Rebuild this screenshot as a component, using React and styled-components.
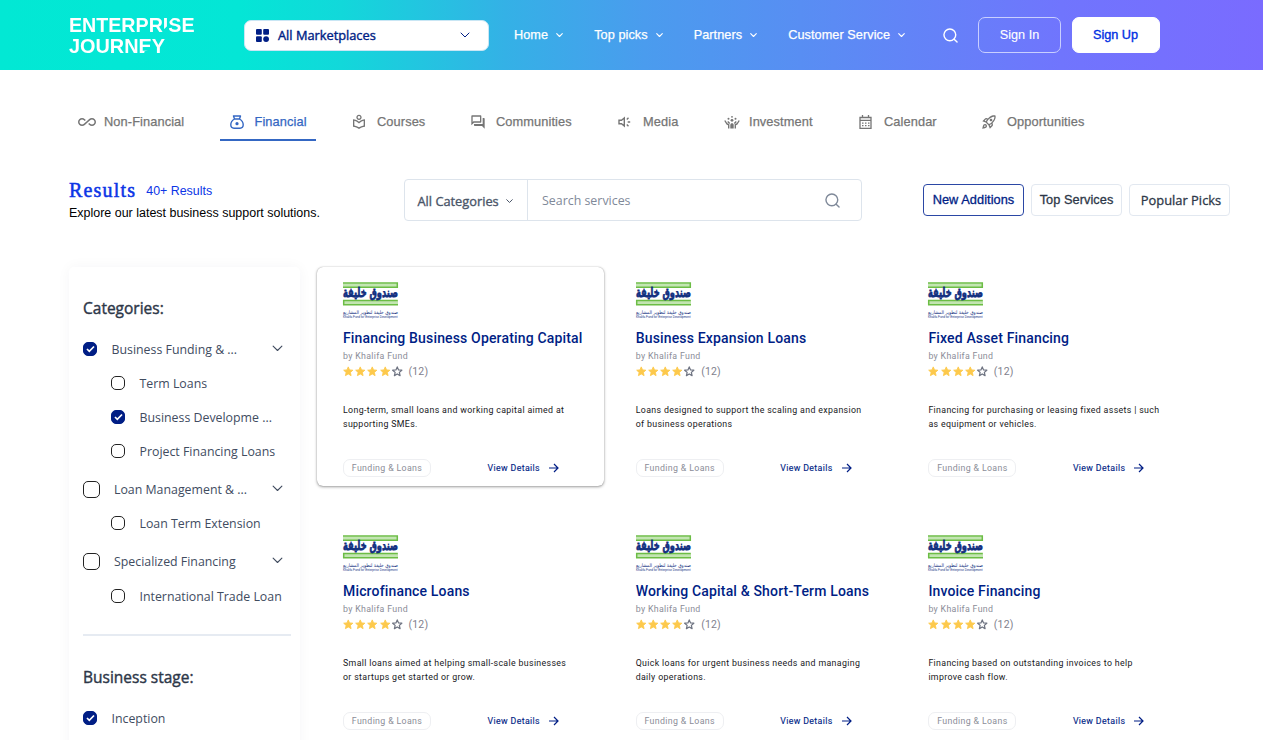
import React from "react";
import styled, { createGlobalStyle } from "styled-components";
import { MdOutlineLocalLibrary, MdOutlineForum, MdAllInclusive, MdOutlineRocketLaunch } from "react-icons/md";

const helv = '"Liberation Sans", Arial, sans-serif';
const open = '"Open Sans", "Noto Sans", sans-serif';

const Global = createGlobalStyle`
  * { box-sizing: border-box; }
  html, body { margin: 0; background: #fff; overflow: hidden; height: 740px; }
  svg { display: block; flex: none; overflow: visible; }
`;

const Page = styled.div`
  width: 1263px;
  height: 740px;
  overflow: hidden;
  background: #fff;
`;

const Header = styled.header`
  display: flex;
  align-items: center;
  height: 70px;
  padding: 0 103px 0 69px;
  background: linear-gradient(90deg, #02e8d4 0%, #04e6d6 19%, #12d8da 27%, #34b1e6 40%, #4a9cee 51%, #5b8bf4 66%, #7075fd 84%, #7a6bff 100%);
`;

const Marketplaces = styled.div`
  display: flex;
  align-items: center;
  width: 245px;
  height: 31px;
  margin-left: 49px;
  padding: 0 18px 0 11px;
  background: #fff;
  border: 1px solid #c9e6f4;
  border-radius: 7px;
  color: #001e85;
  font: 12.8px/30px ${open};
`;

const MarketLabel = styled.span`
  flex: 1;
  margin-left: 9px;
  -webkit-text-stroke: 0.4px;
`;

const Nav = styled.nav`
  display: flex;
  gap: 31px;
  margin-left: 25px;
  flex: 1;
`;

const NavItem = styled.div`
  display: flex;
  align-items: center;
  gap: 8px;
  color: #fff;
  font: 12.7px/20px ${helv};
  letter-spacing: 0.07px;
  -webkit-text-stroke: 0.25px #fff;
  white-space: nowrap;
`;

const HeaderButton = styled.button`
  width: ${(p) => p.$w}px;
  height: 36px;
  margin-left: ${(p) => p.$ml}px;
  padding: ${(p) => (p.$solid ? "0 1px 1px 0" : "0 0 1px")};
  border: 1px solid ${(p) => (p.$solid ? "#fff" : "#c9cfff")};
  border-radius: 7px;
  background: ${(p) => (p.$solid ? "#fff" : "transparent")};
  color: ${(p) => (p.$solid ? "#0030e3" : "#fff")};
  font: 12.7px/20px ${helv};
  -webkit-text-stroke: ${(p) => (p.$solid ? 0.35 : 0.1)}px;
`;

const Tabs = styled.nav`
  display: flex;
  height: 32px;
  margin: 39px 0 0 78px;
`;

const Tab = styled.div`
  display: flex;
  align-items: center;
  width: ${(p) => p.$w}px;
  height: 26px;
  color: ${(p) => (p.$active ? "#3467c3" : "#757575")};
  white-space: nowrap;
`;

const ActiveTab = styled(Tab)`
  height: 32px;
  width: 96px;
  margin-left: ${(p) => p.$ml}px;
  margin-right: ${(p) => p.$mr}px;
  padding: 0 0 4px 10px;
  border-bottom: 2px solid #3467c3;
`;

const TabLabel = styled.span`
  margin-left: ${(p) => p.$gap}px;
  font: 12.8px/20px ${helv};
  letter-spacing: 0.1px;
  -webkit-text-stroke: 0.25px;
`;

const Toolbar = styled.section`
  display: flex;
  height: 42px;
  margin: 38px 33px 0 69px;
`;

const Intro = styled.div`
  width: 335px;
`;

const TitleRow = styled.div`
  display: flex;
  height: 23px;
`;

const Title = styled.h1`
  margin: 0;
  color: #0c35e6;
  font: 20px/22px "Liberation Serif", serif;
  letter-spacing: 1.2px;
  -webkit-text-stroke: 0.5px;
`;

const Count = styled.span`
  margin-left: 10px;
  color: #0c35e6;
  font: 12.4px/24px ${helv};
`;

const Lead = styled.p`
  margin: 0;
  color: #000;
  font: 12.47px/22px ${helv};
  white-space: nowrap;
`;

const SearchBox = styled.div`
  display: flex;
  width: 458px;
  height: 42px;
  border: 1px solid #dde4ec;
  border-radius: 4px;
`;

const CategorySelect = styled.div`
  display: flex;
  align-items: center;
  justify-content: space-between;
  width: 123px;
  padding: 2px 14px 0 12.5px;
  border-right: 1px solid #dde4ec;
  color: #4a5568;
  font: 12.8px/20px ${open};
  -webkit-text-stroke: 0.35px;
`;

const SearchField = styled.div`
  display: flex;
  flex: 1;
  align-items: center;
  justify-content: space-between;
  padding: 0 21px 0 14px;
  color: #7f8999;
  font: 12.4px/20px ${open};
`;

const Placeholder = styled.span`
  padding-top: 2px;
`;

const Filters = styled.div`
  display: flex;
  gap: 7px;
  margin: 5px 0 0 61px;
`;

const FilterButton = styled.button`
  width: ${(p) => p.$w}px;
  height: 32px;
  padding: ${(p) => (p.$sans ? "0 0 0 3px" : "0 0 1px")};
  border: 1px solid ${(p) => (p.$active ? "#2b47a5" : "#e2e8f0")};
  border-radius: 4px;
  background: #fff;
  color: ${(p) => (p.$active ? "#001e85" : "#2d3748")};
  font: ${(p) => (p.$sans ? `12.9px/20px ${open}` : `12.75px/20px ${helv}`)};
  -webkit-text-stroke: 0.3px;
  letter-spacing: ${(p) => (p.$sans ? 0 : 0.06)}px;
  white-space: nowrap;
`;

const Content = styled.main`
  display: flex;
  margin: 46px 0 0 69px;
`;

const Sidebar = styled.aside`
  width: 231px;
  height: 520px;
  padding: 31px 9px 0 14px;
  border-radius: 5px;
  box-shadow: 0 0 14px rgba(30, 40, 60, 0.045);
`;

const GroupTitle = styled.h2`
  margin: 0;
  color: #2d3748;
  font: 400 15.5px/20px ${open};
  -webkit-text-stroke: 0.4px;
`;

const FilterRow = styled.div`
  display: flex;
  align-items: center;
  height: 20px;
  margin-top: ${(p) => p.$mt}px;
  padding: 0 8px 0 ${(p) => (p.$child ? 28 : 0)}px;
  color: #414c5f;
  font: 12.35px/20px ${open};
  white-space: nowrap;
`;

const RowLabel = styled.span`
  flex: 1;
  margin-left: ${(p) => (p.$large ? 14 : 14.5)}px;
  padding-top: 1px;
`;

const Box = styled.span`
  display: flex;
  flex: none;
  align-items: center;
  justify-content: center;
  width: ${(p) => (p.$large ? 17 : 14)}px;
  height: ${(p) => (p.$large ? 17 : 14)}px;
  border: 1px solid ${(p) => (p.$on ? "#001e85" : "#222")};
  border-radius: 5px;
  background: ${(p) => (p.$on ? "#001e85" : "#fff")};
`;

const Divider = styled.hr`
  height: 2px;
  margin: 28px 0 31px;
  border: 0;
  background: #e6ebf2;
`;

const Grid = styled.div`
  display: grid;
  grid-template-columns: repeat(3, 286.5px);
  grid-auto-rows: 219px;
  column-gap: 6.2px;
  row-gap: 34.3px;
  margin-left: 17px;
`;

const CardBox = styled.article`
  padding: 14px 20px 0 26px;
  border-radius: 6px;
  box-shadow: ${(p) => (p.$raised ? "0 1px 3px rgba(0,0,0,.38), 0 0 1px rgba(0,0,0,.3)" : "none")};
  font-family: Roboto, sans-serif;
`;

const CardTitle = styled.h3`
  margin: 9px 0 0;
  color: #001e85;
  font: 500 14px/20px Roboto, sans-serif;
  letter-spacing: 0.16px;
  white-space: nowrap;
`;

const Vendor = styled.div`
  margin-top: 1px;
  color: #8b8d98;
  font-size: 8.8px;
  line-height: 14px;
  letter-spacing: 0.32px;
`;

const Rating = styled.div`
  display: flex;
  align-items: center;
  gap: 1.7px;
  height: 16px;
  color: #7f818d;
  font-size: 10.5px;
  letter-spacing: 0.2px;
`;

const Votes = styled.span`
  margin: 1px 0 0 4.5px;
`;

const Description = styled.p`
  height: 28px;
  margin: 24px -10px 0 0;
  color: #17171b;
  font-size: 8.8px;
  line-height: 14px;
  letter-spacing: 0.345px;
  white-space: pre;
`;

const CardFooter = styled.div`
  display: flex;
  align-items: center;
  margin-top: 28px;
`;

const Tag = styled.span`
  width: 88px;
  height: 18px;
  border: 1px solid #eeeff2;
  border-radius: 7px;
  color: #8b8d98;
  font-size: 8.8px;
  line-height: 17px;
  letter-spacing: 0.35px;
  text-align: center;
`;

const Details = styled.span`
  display: flex;
  align-items: center;
  gap: 9px;
  margin-left: 56.5px;
  color: #001e85;
  font-size: 8.8px;
  letter-spacing: 0.36px;
  -webkit-text-stroke: 0.12px;
`;

function Chevron({ w = 8, stroke = 1 }) {
  return (
    <svg width={w} height={w * 0.7} viewBox="0 0 10 7" fill="none" stroke="currentColor" strokeWidth={stroke * 10 / w}>
      <path d="M1 1l4 4 4-4" strokeLinecap="round" strokeLinejoin="round" />
    </svg>
  );
}

function SearchIcon({ size }) {
  return (
    <svg width={size} height={size} viewBox="0 0 16 16" fill="none" stroke="currentColor" strokeWidth="1.5">
      <circle cx="7.3" cy="7.3" r="6.3" />
      <path d="M11.9 11.9L15 15" strokeLinecap="round" />
    </svg>
  );
}

function Star({ empty }) {
  return (
    <svg width="10.5" height="10.5" viewBox="0 0 24 24" fill={empty ? "none" : "#fdc94c"} stroke={empty ? "#6f7482" : "#fdc94c"} strokeWidth={empty ? 2.8 : 2} strokeLinejoin="round">
      <path d="M12 2l3 6.900 7.500.700-5.700 5 1.700 7.400-6.500-3.900L5.500 22l1.700-7.400-5.700-5L9 8.900z" />
    </svg>
  );
}

function BrandLogo() {
  return (
    <svg width="126" height="42" viewBox="0 0 126 42">
      <defs>
        <mask id="brand-cuts">
          <rect width="126" height="42" fill="#fff" />
          <path d="M94 16L99.500 11V20H94zM99 2.500h6L99 9zM75.300 42V37.500L84 34V42z" fill="#000" />
        </mask>
      </defs>
      <g mask="url(#brand-cuts)" fill="#fff" fontFamily="Liberation Sans, Arial, sans-serif" fontSize="19.400" fontWeight="700">
        <text x="0" y="17.600" textLength="125.5" lengthAdjust="spacingAndGlyphs">ENTERPRISE</text>
        <text x="0" y="39.200" textLength="96" lengthAdjust="spacingAndGlyphs">JOURNEY</text>
      </g>
    </svg>
  );
}

function FundLogo() {
  return (
    <svg width="56" height="38" viewBox="0 0 56 38">
      <path d="M0 2.500h54v4H0zM1 19.500h54v4H1z" fill="#c3e5b2" />
      <path d="M0 2H54.300V6.300H0M54.800 19.500H.700V23.800H55" fill="none" stroke="#6cbd45" strokeWidth="1.500" />
      <text transform="translate(0 15.800) scale(1 1.150)" x="0" y="0" direction="ltr" fontFamily="DejaVu Sans" fontWeight="700" fontSize="11.500" fill="#12307f" stroke="#12307f" strokeWidth=".7" textLength="55" lengthAdjust="spacingAndGlyphs">صندوق خليفة</text>
      <text x="0" y="32.600" direction="ltr" fontFamily="DejaVu Sans" fontSize="4.800" fill="#12307f" textLength="55" lengthAdjust="spacingAndGlyphs">صندوق خليفة لتطوير المشاريع</text>
      <text x="0" y="37.200" fontFamily="Liberation Sans" fontSize="3" fill="#12307f" textLength="54.500" lengthAdjust="spacingAndGlyphs">Khalifa Fund for Enterprise Development</text>
    </svg>
  );
}

function MoneyBag() {
  return (
    <svg width="14" height="14" viewBox="0 0 14 14" fill="none" stroke="currentColor" strokeWidth="1.400" strokeLinejoin="round">
      <path d="M3.500 1h7L9.500 4h-5zM4.500 4C1.800 5.500.8 7.700.8 9.800.8 12 2 13.200 4 13.200h6c2 0 3.200-1.200 3.200-3.400 0-2.100-1-4.300-3.700-5.800" />
      <circle cx="7" cy="8.700" r="1.600" fill="currentColor" stroke="none" />
    </svg>
  );
}

function Megaphone() {
  return (
    <svg width="13" height="12" viewBox="0 0 13 12" fill="none" stroke="currentColor" strokeWidth="1.400">
      <path d="M1 4.300h2.500L6.300 2v8L3.500 7.700H1zM8.800 3.500L10.500 1.800M9.700 6h2.500M8.800 8.500l1.700 1.700" />
    </svg>
  );
}

function Crowd() {
  return (
    <svg width="16" height="14" viewBox="0 0 16 14" fill="currentColor">
      <circle cx="8" cy="5.300" r="1.400" />
      <circle cx="4.500" cy="3.800" r="1" />
      <circle cx="11.500" cy="3.800" r="1" />
      <circle cx="8" cy="1.800" r=".9" />
      <path d="M6.300 13.500V10C6.300 8.800 7 8.200 8 8.200s1.700.6 1.700 1.800v3.500z" />
      <path d="M.8 5.500L3 9l1.700.8v3.700M15.200 5.500L13 9l-1.700.8v3.700M3.700 6.500l2 2M12.300 6.500l-2 2" fill="none" stroke="currentColor" strokeWidth="1.400" />
    </svg>
  );
}

function CalendarIcon() {
  return (
    <svg width="13" height="14" viewBox="0 0 13 14" fill="none" stroke="currentColor" strokeWidth="1.300">
      <path d="M1 2.500h11v10.800H1zM1 5.400h11M3.500 0v3M9.500 0v3" />
      <path d="M3 8.200h7.500M3 10.700h7.500" strokeDasharray="1.500 1.500" />
    </svg>
  );
}

const MarketIcon = () => (
  <svg width="13" height="13" viewBox="0 0 13 13" fill="currentColor">
    <rect width="5.800" height="5.800" rx="1" />
    <rect x="7.200" width="5.800" height="5.800" rx="1" />
    <rect y="7.200" width="5.800" height="5.800" rx="1" />
    <circle cx="10.100" cy="10.100" r="2.900" />
  </svg>
);

const Check = () => (
  <svg width="9" height="8" viewBox="0 0 9 8" fill="none" stroke="#fff" strokeWidth="1.700">
    <path d="M1 4l2.300 2.300L8 1.500" />
  </svg>
);

const Arrow = () => (
  <svg width="10" height="10" viewBox="0 0 10 10" fill="none" stroke="currentColor" strokeWidth="1.200">
    <path d="M0 5h9M5 1l4 4-4 4" />
  </svg>
);

const cards = [
  ["Financing Business Operating Capital", "Long-term, small loans and working capital aimed at\nsupporting SMEs."],
  ["Business Expansion Loans", "Loans designed to support the scaling and expansion\nof business operations"],
  ["Fixed Asset Financing", "Financing for purchasing or leasing fixed assets | such\nas equipment or vehicles."],
  ["Microfinance Loans", "Small loans aimed at helping small-scale businesses\nor startups get started or grow."],
  ["Working Capital & Short-Term Loans", "Quick loans for urgent business needs and managing\ndaily operations."],
  ["Invoice Financing", "Financing based on outstanding invoices to help\nimprove cash flow."],
];

const Card = ({ title, text, raised }) => (
  <CardBox $raised={raised}>
    <FundLogo />
    <CardTitle>{title}</CardTitle>
    <Vendor>by Khalifa Fund</Vendor>
    <Rating>
      {[0, 1, 2, 3].map((i) => <Star key={i} />)}
      <Star empty />
      <Votes>(12)</Votes>
    </Rating>
    <Description>{text}</Description>
    <CardFooter>
      <Tag>Funding &amp; Loans</Tag>
      <Details>View Details <Arrow /></Details>
    </CardFooter>
  </CardBox>
);

const Option = ({ mt, child, on, large, expandable, children }) => (
  <FilterRow $mt={mt} $child={child}>
    <Box $on={on} $large={large}>{on && <Check />}</Box>
    <RowLabel $large={large}>{children}</RowLabel>
    {expandable && <Chevron w={11} stroke={1.1} />}
  </FilterRow>
);

export default function App() {
  return (
    <Page>
      <Global />
      <Header>
        <BrandLogo />
        <Marketplaces>
          <MarketIcon />
          <MarketLabel>All Marketplaces</MarketLabel>
          <Chevron w={10} stroke={1} />
        </Marketplaces>
        <Nav>
          <NavItem>Home <Chevron w={7} stroke={1.1} /></NavItem>
          <NavItem>Top picks <Chevron w={7} stroke={1.1} /></NavItem>
          <NavItem>Partners <Chevron w={7} stroke={1.1} /></NavItem>
          <NavItem>Customer Service <Chevron w={7} stroke={1.1} /></NavItem>
        </Nav>
        <NavItem><SearchIcon size={15} /></NavItem>
        <HeaderButton $w={83} $ml={20}>Sign In</HeaderButton>
        <HeaderButton $w={88} $ml={11} $solid>Sign Up</HeaderButton>
      </Header>
      <Tabs>
        <Tab $w={107}><MdAllInclusive size={18} /><TabLabel $gap={8}>Non-Financial</TabLabel></Tab>
        <ActiveTab $active $ml={34.5} $mr={35.5}><MoneyBag /><TabLabel $gap={11}>Financial</TabLabel></ActiveTab>
        <Tab $w={119}><MdOutlineLocalLibrary size={16} /><TabLabel $gap={10}>Courses</TabLabel></Tab>
        <Tab $w={148}><MdOutlineForum size={16} /><TabLabel $gap={10}>Communities</TabLabel></Tab>
        <Tab $w={106}><Megaphone /><TabLabel $gap={12}>Media</TabLabel></Tab>
        <Tab $w={135}><Crowd /><TabLabel $gap={9}>Investment</TabLabel></Tab>
        <Tab $w={122}><CalendarIcon /><TabLabel $gap={12}>Calendar</TabLabel></Tab>
        <Tab><MdOutlineRocketLaunch size={16} /><TabLabel $gap={10}>Opportunities</TabLabel></Tab>
      </Tabs>
      <Toolbar>
        <Intro>
          <TitleRow><Title>Results</Title><Count>40+ Results</Count></TitleRow>
          <Lead>Explore our latest business support solutions.</Lead>
        </Intro>
        <SearchBox>
          <CategorySelect>All Categories <Chevron w={7} /></CategorySelect>
          <SearchField><Placeholder>Search services</Placeholder><SearchIcon size={15} /></SearchField>
        </SearchBox>
        <Filters>
          <FilterButton $w={101} $active>New Additions</FilterButton>
          <FilterButton $w={91}>Top Services</FilterButton>
          <FilterButton $w={101} $sans>Popular Picks</FilterButton>
        </Filters>
      </Toolbar>
      <Content>
        <Sidebar>
          <GroupTitle>Categories:</GroupTitle>
          <Option mt={21} on expandable>Business Funding &amp; ...</Option>
          <Option mt={14} child>Term Loans</Option>
          <Option mt={14} child on>Business Developme ...</Option>
          <Option mt={14} child>Project Financing Loans</Option>
          <Option mt={18} large expandable>Loan Management &amp; ...</Option>
          <Option mt={14} child>Loan Term Extension</Option>
          <Option mt={18} large expandable>Specialized Financing</Option>
          <Option mt={15} child>International Trade Loan</Option>
          <Divider />
          <GroupTitle>Business stage:</GroupTitle>
          <Option mt={21} on>Inception</Option>
        </Sidebar>
        <Grid>
          {cards.map(([title, text], i) => (
            <Card key={title} title={title} text={text} raised={i === 0} />
          ))}
        </Grid>
      </Content>
    </Page>
  );
}
